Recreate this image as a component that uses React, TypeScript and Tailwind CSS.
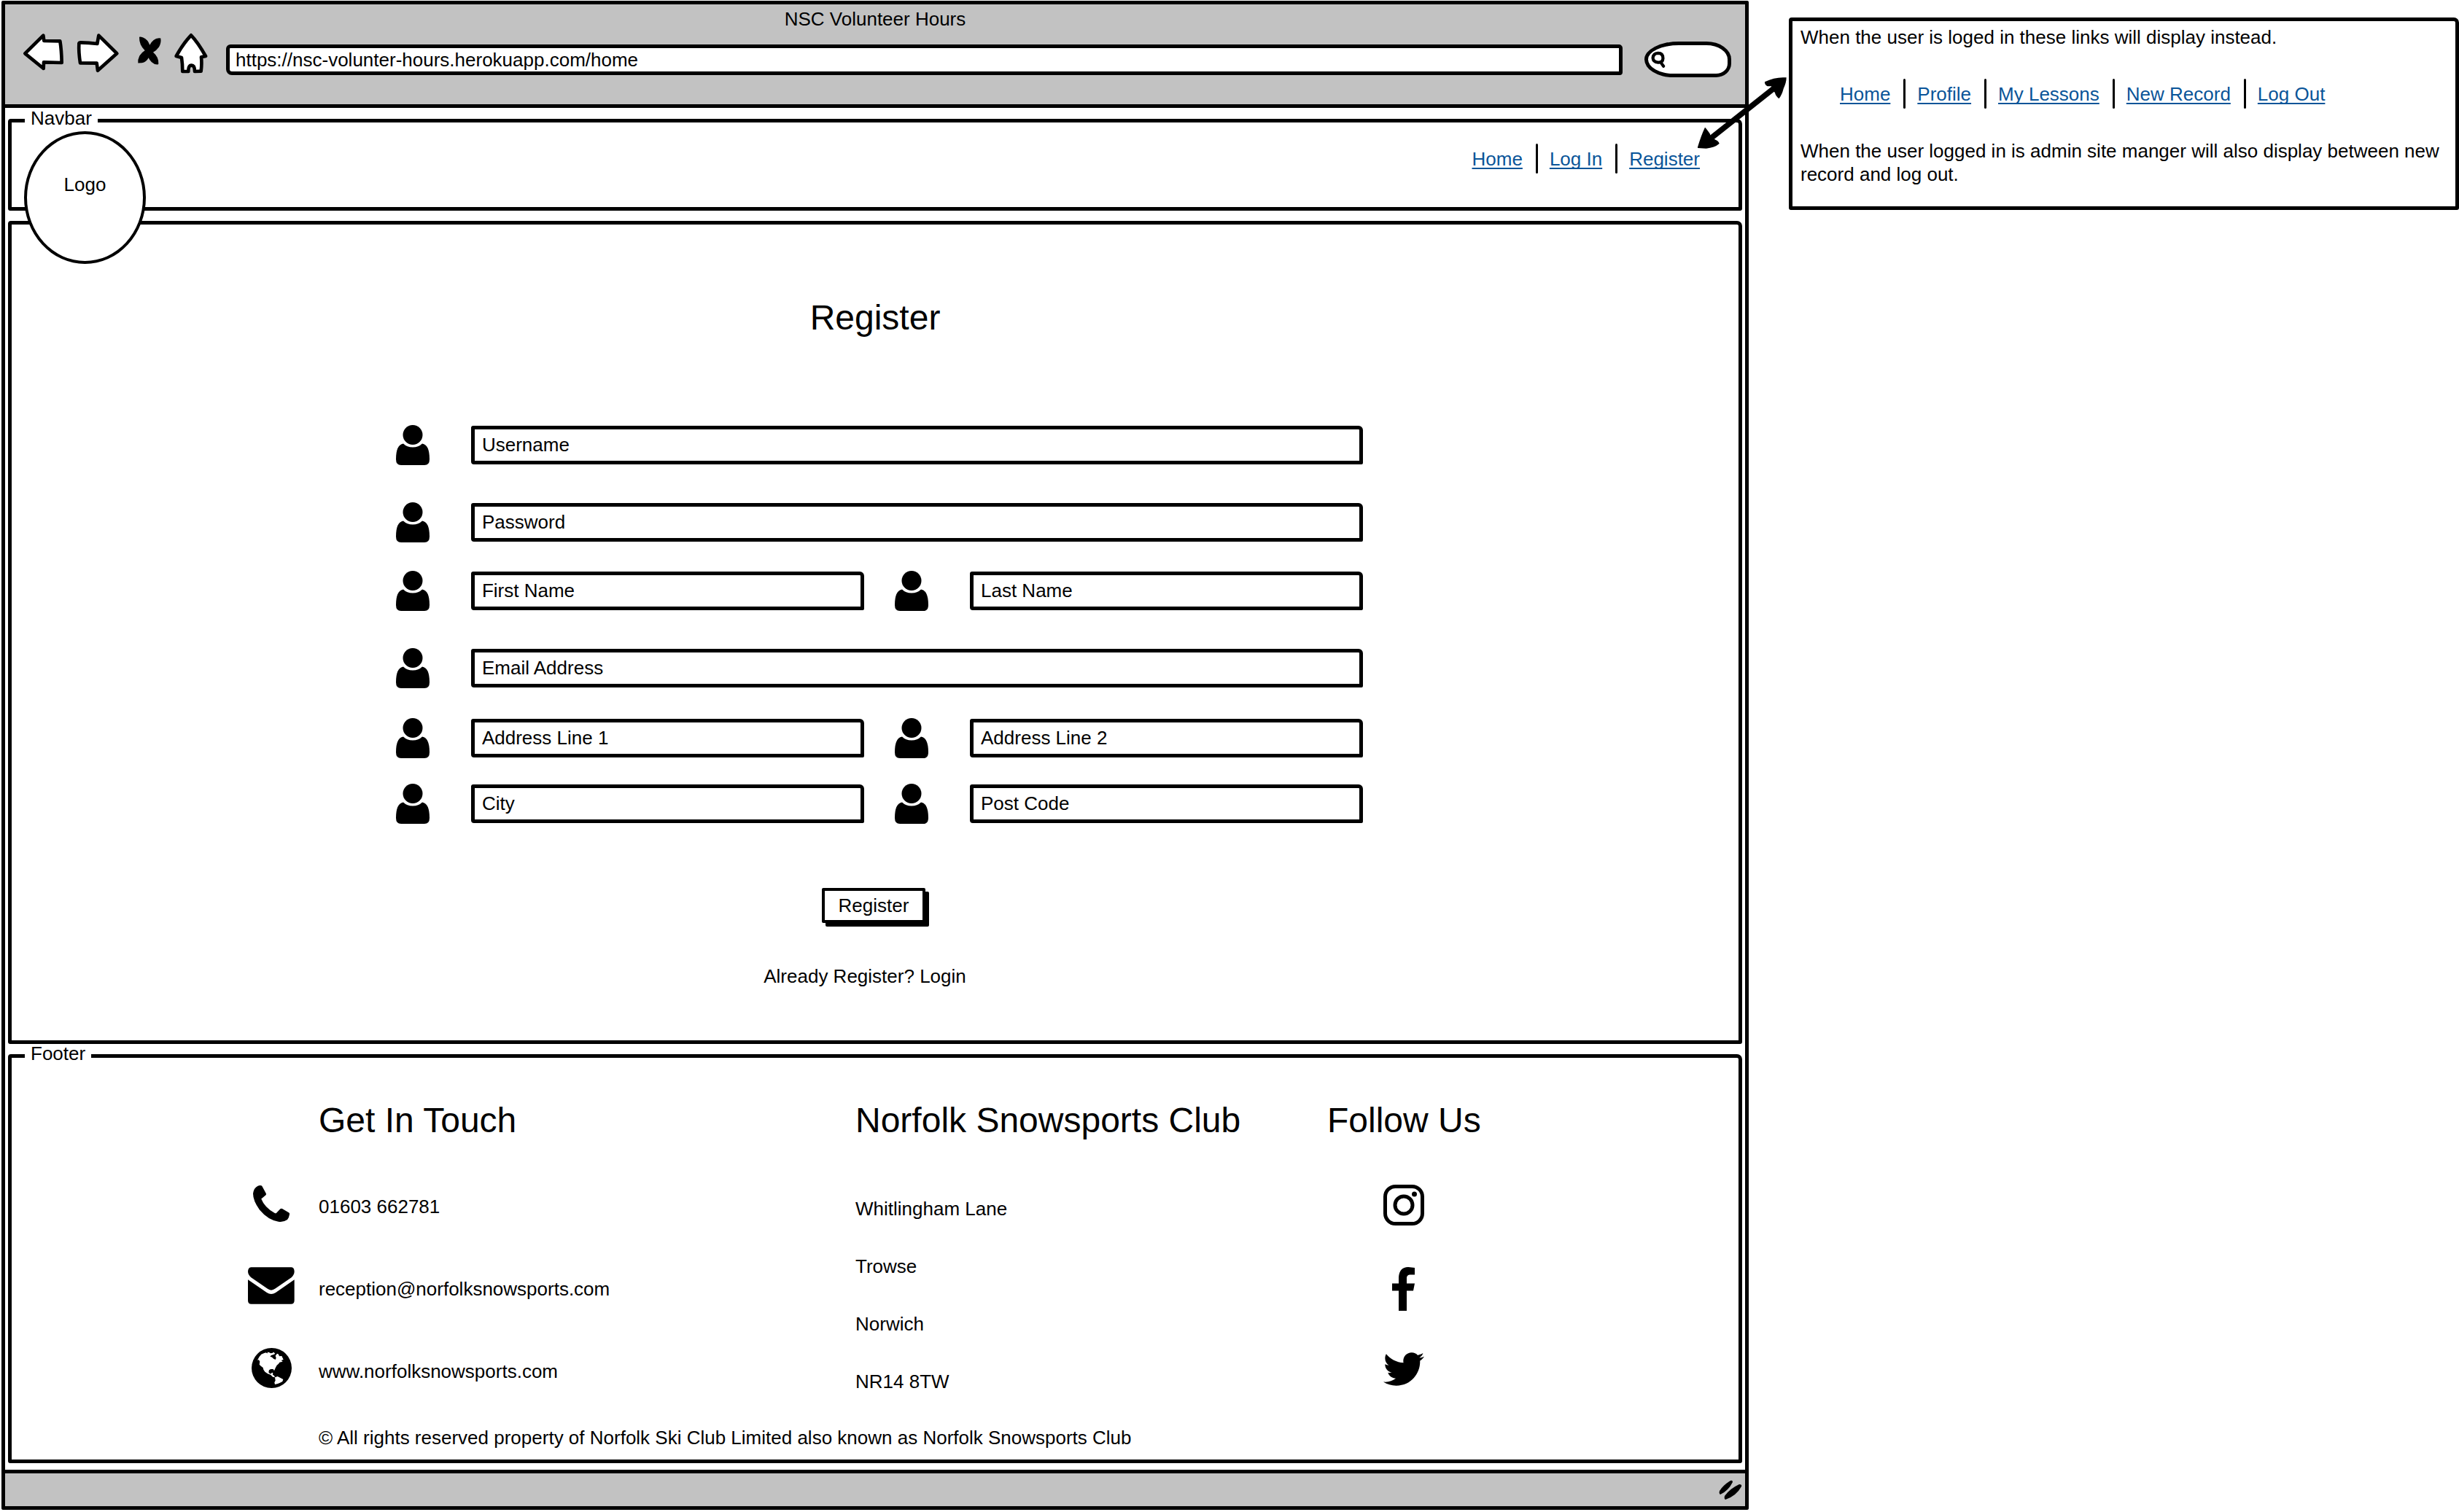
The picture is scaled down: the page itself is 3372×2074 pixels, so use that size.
import React from "react";

const TEXT = "text-[26px] leading-8";

function Person() {
  return (
    <svg viewBox="0 0 46 55" className="h-[55px] w-[46px]" aria-hidden="true">
      <circle cx="23" cy="13.5" r="13.5" />
      <path d="M10 25.5Q15 30.5 23 30.5Q31 30.5 36 25.5Q46 27 46 47Q46 55 39 55H7Q0 55 0 47Q0 27 10 25.5Z" />
    </svg>
  );
}

function BackIcon() {
  return (
    <svg viewBox="32 80 171 159" className="h-[53px] w-[57px]" fill="#fff" stroke="#000" strokeWidth="14" strokeLinejoin="round" aria-hidden="true">
      <path d="M42 165L117 91L120 113L186 114Q192 150 193 203L119 201L118 227Z" />
    </svg>
  );
}

function ForwardIcon() {
  return (
    <svg viewBox="252 80 180 165" className="h-[55px] w-[60px]" fill="#fff" stroke="#000" strokeWidth="14" strokeLinejoin="round" aria-hidden="true">
      <path d="M265 124Q266 120 272 120Q306 120 340 125L346 91L421 165L342 235L338 205L270 204Q263 160 265 124Z" />
    </svg>
  );
}

function StopIcon() {
  return (
    <svg viewBox="500 92 102 122" className="h-[41px] w-[34px]" aria-hidden="true">
      <path d="M509 97Q512 94 525 99Q545 108 552 130Q565 103 590 101L597 102Q600 120 590 138Q580 152 566 160Q590 180 588 208L585 210Q572 211 560 200Q550 190 547 182Q538 200 520 203L504 204Q502 190 510 174Q518 160 532 152Q508 130 509 97Z" />
    </svg>
  );
}

function HomeIcon() {
  return (
    <svg viewBox="648 76 144 168" className="h-[56px] w-[48px]" fill="#fff" stroke="#000" strokeWidth="14" strokeLinejoin="round" aria-hidden="true">
      <path d="M720 86Q748 115 780 172L762 176Q765 205 761 234L735 235Q735 210 722 210Q708 210 709 235L685 235Q685 205 681 178L659 172Q688 120 720 86Z" />
    </svg>
  );
}

function SearchIcon() {
  return (
    <svg viewBox="130 98 62 72" className="h-6 w-5 shrink-0" fill="none" stroke="#000" strokeWidth="13" strokeLinecap="round" aria-hidden="true">
      <path d="M160 106Q181 106 181 128Q180 146 160 145Q139 144 138 126Q140 107 160 106ZM172 146L183 161" />
    </svg>
  );
}

function PhoneIcon() {
  return (
    <svg viewBox="138 74 151 151" className="h-[50px] w-[50px]" aria-hidden="true">
      <path d="M172 75Q175 76 177 80L192 108Q193 112 190 115L172 130Q186 166 228 189Q232 191 235 188L250 172Q254 168 259 171L287 187Q290 190 289 194Q287 208 280 216Q265 227 243 224Q200 217 165 175Q138 138 138 108Q141 84 158 76Q166 73 172 75Z" />
    </svg>
  );
}

function MailIcon() {
  return (
    <svg viewBox="120 411 193 152" className="h-[51px] w-[64px]" aria-hidden="true">
      <path d="M133 411H300Q312 412 312 430Q311 443 300 453L233 499Q216 512 200 499L133 453Q121 443 120 430Q120 412 133 411Z" />
      <path d="M120 462L198 516Q216 528 235 516L312 462V548Q312 563 298 563H134Q120 563 120 548Z" />
    </svg>
  );
}

function GlobeIcon() {
  return (
    <svg viewBox="132 747 165 165" className="h-[55px] w-[55px]" aria-hidden="true">
      <circle cx="214.500" cy="829.500" r="82.500" />
      <g fill="#fff">
        <path d="M156 797L164 783L172 773L184 768L197 764L212 766L224 765L229 771L221 775L213 777L208 782L216 785L222 791L230 795L233 788L230 779L237 770L243 773L246 781L256 780L263 795L254 798L260 803L247 806L243 812L236 818L231 827L227 836L225 841L221 834L211 834L204 838L202 847L207 853L212 853L216 848L220 850L219 857L225 861L228 868L219 866L210 857L198 853L187 845L181 836L179 828L170 821L164 815L166 803L162 796Z" />
        <path d="M228 868L239 864L249 869L262 876L259 885L249 890L240 894L228 897L226 889L230 881Z" />
      </g>
      <path d="M204 766l7 3l9-2l-3-4zM197 763l-6 4l7 2z" />
    </svg>
  );
}

function InstagramIcon() {
  return (
    <svg viewBox="0 0 56 56" className="h-[56px] w-[56px]" fill="none" stroke="#000" strokeWidth="5" aria-hidden="true">
      <rect x="2.500" y="2.500" width="51" height="51" rx="14" />
      <circle cx="28" cy="28" r="12" />
      <circle cx="42.500" cy="13" r="3.500" fill="#000" stroke="none" />
    </svg>
  );
}

function FacebookIcon() {
  return (
    <svg viewBox="0 0 32 60" className="h-[60px] w-8" aria-hidden="true">
      <path d="M31 1V10.500H24Q20 11 20 15V22.500H31L29 32.500H20V60H9V32.500H0V22.500H9V14Q10 0 22 0Z" />
    </svg>
  );
}

function TwitterIcon() {
  return (
    <svg viewBox="0 48 512 416" className="h-[46px] w-[56px]" aria-hidden="true">
      <path d="M459.370 151.716c.325 4.548.325 9.097.325 13.645 0 138.720-105.583 298.558-298.558 298.558-59.452 0-114.680-17.219-161.137-47.106 8.447.974 16.568 1.299 25.340 1.299 49.055 0 94.213-16.568 130.274-44.832-46.132-.975-84.792-31.188-98.112-72.772 6.498.974 12.995 1.624 19.818 1.624 9.421 0 18.843-1.300 27.614-3.573-48.081-9.747-84.143-51.980-84.143-102.985v-1.299c13.969 7.797 30.214 12.670 47.431 13.319-28.264-18.843-46.781-51.005-46.781-87.391 0-19.492 5.197-37.360 14.294-52.954 51.655 63.675 129.300 105.258 216.365 109.807-1.624-7.797-2.599-15.918-2.599-24.040 0-57.828 46.782-104.934 104.934-104.934 30.213 0 57.502 12.670 76.670 33.137 23.715-4.548 46.456-13.320 66.599-25.340-7.798 24.366-24.366 44.833-46.132 57.827 21.117-2.273 41.584-8.122 60.426-16.243-14.292 20.791-32.161 39.308-52.628 54.253z" />
    </svg>
  );
}

function DoubleArrow() {
  return (
    <svg viewBox="325 198 366 294" className="pointer-events-none absolute top-[77px] left-[-130px] h-[98px] w-[122px]" aria-hidden="true">
      <path d="M378 450L640 242" stroke="#000" strokeWidth="23" />
      <path d="M324 489Q338 440 355 404Q362 410 375 430Q378 445 398 455Q412 460 414 471Q395 488 360 491Z" />
      <path d="M690 199Q645 195 601 217Q600 228 612 235L628 235Q636 255 643 262Q645 275 659 286Q672 270 678 245Q690 220 690 199Z" />
    </svg>
  );
}

function Links({ items }: { items: string[] }) {
  return (
    <ul className="flex items-center">
      {items.map((item, i) => (
        <li key={item} className="flex items-center">
          {i > 0 && <span className="mr-4 ml-[18px] h-[41px] w-[3px] rounded-full bg-black" />}
          <a
            href={"#" + item.toLowerCase().replace(" ", "-")}
            className="text-[26px] leading-8 whitespace-nowrap text-[#0a5599] underline decoration-2 underline-offset-[3px] [text-decoration-skip-ink:none]"
          >
            {item}
          </a>
        </li>
      ))}
    </ul>
  );
}

function Legend({ children }: { children: React.ReactNode }) {
  return (
    <h2 className="absolute -top-[18px] left-[18px] bg-white px-2 text-[26px] leading-6">{children}</h2>
  );
}

function Field({ label, type = "text" }: { label: string; type?: string }) {
  const id = label.toLowerCase().replace(/ /g, "-");
  return (
    <div className="flex min-w-0 flex-1 items-center gap-[57px]">
      <label htmlFor={id} aria-label={label} className="shrink-0">
        <Person />
      </label>
      <input
        id={id}
        type={type}
        placeholder={label}
        className="h-[53px] min-w-0 flex-1 rounded-[3px_6px_2px_4px] border-5 border-black bg-white px-2.5 text-[26px] leading-8 placeholder:text-black placeholder:opacity-100"
      />
    </div>
  );
}

const PANEL = "relative rounded-[4px_7px_3px_3px] border-5 border-black bg-white";

const contacts = [
  { icon: <PhoneIcon />, text: "01603 662781", href: "tel:01603662781" },
  { icon: <MailIcon />, text: "reception@norfolksnowsports.com", href: "mailto:reception@norfolksnowsports.com" },
  { icon: <GlobeIcon />, text: "www.norfolksnowsports.com", href: "#site" },
];

const address = ["Whitlingham Lane", "Trowse", "Norwich", "NR14 8TW"];

export default function App() {
  return (
    <div className="grid grid-cols-[2396fr_919fr] items-start gap-[55px] bg-white pt-px pb-0.5 pl-0.5 font-['Liberation_Sans',Arial,sans-serif] text-black">
      <div className="min-w-0 rounded-[2px] border-5 border-black bg-white">
        <header className="border-b-5 border-black bg-[#c2c2c2] pb-[37px]">
          <p className={`${TEXT} pt-1 text-center`}>NSC Volunteer Hours</p>
          <div className="flex items-start pt-[3px] pr-[19px] pl-6">
            <div className="flex items-start">
              <button type="button" aria-label="Back">
                <BackIcon />
              </button>
              <button type="button" aria-label="Forward" className="ml-4">
                <ForwardIcon />
              </button>
              <button type="button" aria-label="Stop" className="mt-1 ml-6">
                <StopIcon />
              </button>
              <button type="button" aria-label="Home" className="ml-4">
                <HomeIcon />
              </button>
            </div>
            <input
              type="text"
              aria-label="Address"
              defaultValue="https://nsc-volunter-hours.herokuapp.com/home"
              className="mt-4 ml-6 h-[42px] min-w-0 flex-1 rounded-[6px_5px_4px_8px] border-5 border-black bg-white px-2 text-[26px] leading-8"
            />
            <div className="mt-3 ml-[30px] flex h-[49px] w-[119px] items-center rounded-[50px_36px_22px_42px/26px_26px_20px_26px] border-5 border-black bg-white pl-1">
              <SearchIcon />
              <input type="search" aria-label="Search" className="w-16 min-w-0 outline-none" />
            </div>
          </div>
        </header>

        <div className="flex flex-col gap-3.5 px-1 pt-[15px] pb-[9px]">
          <nav className={`${PANEL} z-10 pt-[29px] pr-[53px] pb-[46px]`}>
            <Legend>Navbar</Legend>
            <div className="absolute top-[12px] left-[17px] flex h-[182px] w-[167px] justify-center rounded-[50%] border-4 border-black bg-white pt-[53px]">
              <span className={TEXT}>Logo</span>
            </div>
            <div className="flex justify-end">
              <Links items={["Home", "Log In", "Register"]} />
            </div>
          </nav>

          <main className={`${PANEL} pt-[100px] pb-[72px]`}>
            <h1 className="text-center text-5xl leading-[56px]">Register</h1>
            <form className="flex flex-col items-center" onSubmit={(e) => e.preventDefault()}>
              <div className="mt-[119px] ml-3 flex w-[56%] flex-col">
                <div className="flex"><Field label="Username" /></div>
                <div className="mt-[51px] flex"><Field label="Password" type="password" /></div>
                <div className="mt-[39px] flex gap-[42px]">
                  <Field label="First Name" />
                  <Field label="Last Name" />
                </div>
                <div className="mt-[51px] flex"><Field label="Email Address" type="email" /></div>
                <div className="mt-[41px] flex gap-[42px]">
                  <Field label="Address Line 1" />
                  <Field label="Address Line 2" />
                </div>
                <div className="mt-[35px] flex gap-[42px]">
                  <Field label="City" />
                  <Field label="Post Code" />
                </div>
              </div>
              <button
                type="submit"
                className="mt-[88px] mr-1 rounded-[2px] border-4 border-black bg-white px-[19px] py-1 text-[26px] leading-8 shadow-[5px_5px_0_0_#000]"
              >
                Register
              </button>
              <p className={`${TEXT} mt-[57px] mr-7`}>
                Already Register? <a href="#login">Login</a>
              </p>
            </form>
          </main>

          <footer className={`${PANEL} pt-[58px] pb-[14px]`}>
            <Legend>Footer</Legend>
            <div className="grid grid-cols-[833fr_647fr_564fr] pl-[324px]">
              <section>
                <h2 className="pl-[97px] text-5xl leading-[56px]">Get In Touch</h2>
                <ul className="mt-[29px]">
                  {contacts.map((c) => (
                    <li key={c.text} className="flex h-[113px] items-center gap-[33px]">
                      <span className="flex w-16 justify-center">{c.icon}</span>
                      <a href={c.href} className={`${TEXT} pt-2`}>{c.text}</a>
                    </li>
                  ))}
                </ul>
              </section>
              <section>
                <h2 className="text-5xl leading-[56px]">Norfolk Snowsports Club</h2>
                <ul className="mt-[53px]">
                  {address.map((line) => (
                    <li key={line} className={`${TEXT} flex h-[79px] items-center`}>{line}</li>
                  ))}
                </ul>
              </section>
              <section className="justify-self-start">
                <h2 className="text-5xl leading-[56px]">Follow Us</h2>
                <div className="mt-[60px] flex flex-col items-center gap-[57px]">
                  <a href="#instagram" aria-label="Instagram"><InstagramIcon /></a>
                  <a href="#facebook" aria-label="Facebook"><FacebookIcon /></a>
                  <a href="#twitter" aria-label="Twitter"><TwitterIcon /></a>
                </div>
              </section>
            </div>
            <p className={`${TEXT} mt-[22px] pl-[421px]`}>
              © All rights reserved property of Norfolk Ski Club Limited also known as Norfolk Snowsports Club
            </p>
          </footer>
        </div>

        <div className="flex h-[50px] items-center justify-end border-t-5 border-black bg-[#c2c2c2] pr-1">
          <svg viewBox="0 0 32 28" className="h-7 w-8" aria-hidden="true">
            <path d="M16 1Q19 0 19 3Q13 15 2 20Q0 19 1 15Q6 7 16 1Z" />
            <path d="M28 6Q32 6 31 9Q24 22 9 27Q7 26 8 22Q15 12 28 6Z" />
          </svg>
        </div>
      </div>

      <aside className="relative z-20 mt-[23px] min-w-0 rounded-[4px_7px_3px_3px] border-5 border-black bg-white px-[11px] pt-1.5 pb-7">
        <DoubleArrow />
        <p className={TEXT}>When the user is loged in these links will display instead.</p>
        <div className="mt-[41px] pl-[54px]">
          <Links items={["Home", "Profile", "My Lessons", "New Record", "Log Out"]} />
        </div>
        <p className={`${TEXT} mt-[42px]`}>
          When the user logged in is admin site manger will also display between new record and log out.
        </p>
      </aside>
    </div>
  );
}
